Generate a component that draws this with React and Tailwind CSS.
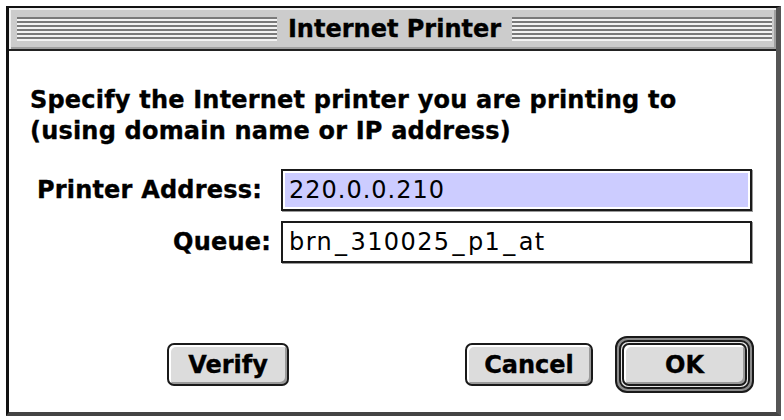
import React from 'react'

const stripes =
  'h-[24px] flex-1 bg-[repeating-linear-gradient(to_bottom,#7a7a7a_0px,#7a7a7a_2px,#f4f4f4_2px,#f4f4f4_4px)]'

// bold "Charcoal" look
const heavy = 'font-bold text-black [-webkit-text-stroke:0.35px_black]'

const btn =
  'h-[43px] rounded-[7px] border-2 border-[#1a1a1a] bg-[#dcdcdc] shadow-[inset_2px_2px_0_#ffffff,inset_-2px_-2px_0_#9a9a9a] flex items-center justify-center text-[24px] ' +
  heavy

const Under = () => <span className="mx-[2px]">_</span>

export default function App() {
  return (
    <div className="w-[784px] h-[420px] bg-white pt-[6px] pl-[6px] font-['DejaVu_Sans',sans-serif]">
      <div className="w-[775px] h-[410px] flex flex-col border-t-2 border-l-[3px] border-r-[5px] border-b-[4px] border-t-[#111] border-l-[#111] border-r-[#555] border-b-[#444]">
        {/* title bar */}
        <div className="h-[43px] bg-[#cccccc] border-b-2 border-[#222] shadow-[inset_2px_2px_0_#eeeeee,inset_-2px_-2px_0_#a0a0a0] flex items-center pl-[8px] pr-[4px] gap-[11px]">
          <div className={stripes} />
          <span className={`text-[24px] leading-none ${heavy}`}>Internet Printer</span>
          <div className={stripes} />
        </div>

        {/* content */}
        <div className="flex-1 bg-white pt-[34px]">
          <p className={`pl-[21px] text-[24px] leading-[31px] tracking-[0.2px] ${heavy}`}>
            Specify the Internet printer you are printing to
            <br />
            (using domain name or IP address)
          </p>

          <div className="mt-[22px] flex items-center">
            <span className={`w-[253px] text-right text-[24px] tracking-[0.2px] ${heavy}`}>Printer Address:</span>
            <div className="ml-[19px] w-[471px] h-[42px] border-2 border-[#1a1a1a] shadow-[1px_1px_0_#9a9a9a] bg-white p-[2px]">
              <div className="h-full bg-[#ccccff] flex items-center pl-[4px] text-[24px] tracking-[1px] text-black">220.0.0.210</div>
            </div>
          </div>

          <div className="mt-[10px] flex items-center">
            <span className={`w-[262px] text-right text-[24px] tracking-[0.2px] ${heavy}`}>Queue:</span>
            <div className="ml-[10px] w-[471px] h-[42px] border-2 border-[#1a1a1a] shadow-[1px_1px_0_#9a9a9a] bg-white flex items-center pl-[6px] text-[24px] tracking-[1.4px] text-black">
              brn<Under />310025<Under />p1<Under />at
            </div>
          </div>

          <div className="mt-[73px] flex items-center">
            <button className={`ml-[158px] w-[122px] ${btn}`}>Verify</button>
            <button className={`ml-[176px] w-[128px] ${btn}`}>Cancel</button>
            <div className="ml-[22px] rounded-[12px] border-2 border-[#1a1a1a] bg-[#8c8c8c] p-[2px]">
              <div className="rounded-[9px] border-2 border-[#1a1a1a] bg-[#e6e6e6] p-[1px]">
                <button className={`w-[125px] ${btn}`}>OK</button>
              </div>
            </div>
          </div>
        </div>
      </div>
    </div>
  )
}
